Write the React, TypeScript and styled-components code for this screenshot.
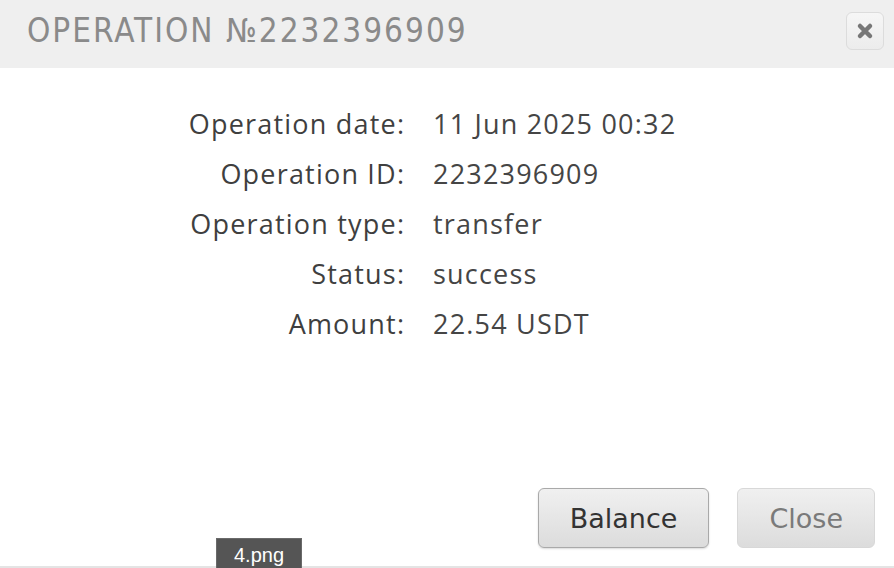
import React from "react";
import styled, { createGlobalStyle } from "styled-components";

const Global = createGlobalStyle`
  html, body {
    margin: 0;
    padding: 0;
    background: #ffffff;
  }
  body {
    font-family: "Open Sans", "Noto Sans", sans-serif;
  }
`;

const Dialog = styled.div`
  position: relative;
  width: 894px;
  height: 568px;
  display: flex;
  flex-direction: column;
  overflow: hidden;
  background: #fff;
`;

const Header = styled.div`
  height: 68px;
  flex: none;
  background: #efefef;
  display: flex;
  align-items: center;
  justify-content: space-between;
  padding: 0 10px 0 27px;
  box-sizing: border-box;
`;

const Title = styled.h1`
  margin: -7px 0 0;
  font-family: "DejaVu Sans Condensed", "DejaVu Sans", sans-serif;
  font-stretch: condensed;
  font-weight: normal;
  font-size: 33px;
  letter-spacing: 2px;
  color: #8a8a8a;
`;

const CloseIcon = styled.button`
  width: 38px;
  height: 38px;
  margin-top: -6px;
  border: 1px solid #dcdcdc;
  border-radius: 6px;
  background: linear-gradient(#f6f6f6, #ececec);
  display: flex;
  align-items: center;
  justify-content: center;
  padding: 0;
`;

const Content = styled.div`
  flex: 1;
  padding-top: 30px;
`;

const Details = styled.dl`
  margin: 0;
  display: grid;
  grid-template-columns: 404px auto;
  column-gap: 29px;
  grid-auto-rows: 50px;
  align-items: center;
  font-size: 27px;
  letter-spacing: 1.2px;
  color: #454545;
`;

const Label = styled.dt`
  text-align: right;
  font-weight: 500;
  color: #3f3f3f;
  margin-right: -1.2px;
`;

const Value = styled.dd`
  margin: 0;
`;

const Footer = styled.div`
  display: flex;
  justify-content: flex-end;
  gap: 28px;
  padding: 0 19px 18px 0;
  border-bottom: 2px solid #e4e4e4;
`;

const Button = styled.button<{ $muted?: boolean }>`
  height: 60px;
  padding: 0 31px;
  border-radius: 6px;
  border: 1px solid ${(p) => (p.$muted ? "#d8d8d8" : "#a9a9a9")};
  background: linear-gradient(#f0f0f0 0%, #e6e6e6 50%, #dcdcdc 100%);
  font-family: "DejaVu Sans", "Liberation Sans", sans-serif;
  font-size: 27px;
  color: ${(p) => (p.$muted ? "#7a7a7a" : "#333")};
  box-shadow: ${(p) => (p.$muted ? "none" : "0 1px 2px rgba(0,0,0,0.15)")};
`;

const Tooltip = styled.div`
  position: absolute;
  left: 216px;
  top: 538px;
  width: 86px;
  height: 40px;
  background: #555;
  border: 1px solid #6a6a6a;
  box-sizing: border-box;
  color: #fff;
  font-family: "Liberation Sans", sans-serif;
  font-size: 20px;
  text-align: center;
  padding-top: 5px;
`;

const rows: [string, string][] = [
  ["Operation date:", "11 Jun 2025 00:32"],
  ["Operation ID:", "2232396909"],
  ["Operation type:", "transfer"],
  ["Status:", "success"],
  ["Amount:", "22.54 USDT"],
];

export default function App() {
  return (
    <Dialog>
      <Global />
      <Header>
        <Title>OPERATION №2232396909</Title>
        <CloseIcon aria-label="close">
          <svg width="18" height="18" viewBox="0 0 18 18">
            <path d="M4 4 L14 14 M14 4 L4 14" stroke="#777" strokeWidth="4.5" strokeLinecap="round" />
          </svg>
        </CloseIcon>
      </Header>
      <Content>
        <Details>
          {rows.map(([k, v]) => (
            <React.Fragment key={k}>
              <Label>{k}</Label>
              <Value>{v}</Value>
            </React.Fragment>
          ))}
        </Details>
      </Content>
      <Footer>
        <Button>Balance</Button>
        <Button $muted>Close</Button>
      </Footer>
      <Tooltip>4.png</Tooltip>
    </Dialog>
  );
}
